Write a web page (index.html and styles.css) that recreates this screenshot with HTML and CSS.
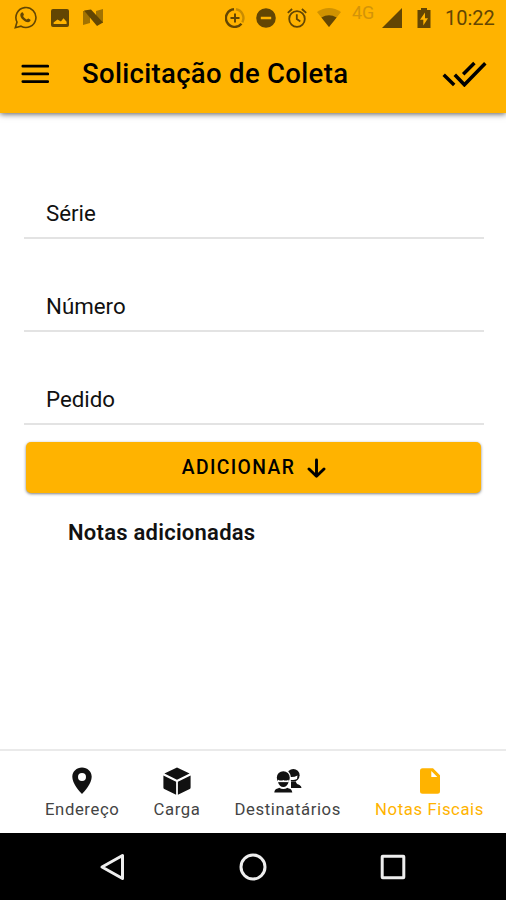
FILE: index.html
```html
<!doctype html>
<html lang="pt-BR">
	<head>
		<meta charset="UTF-8" />
		<meta name="viewport" content="width=device-width, initial-scale=1.0" />
		<title>Solicitação de Coleta</title>
		<link rel="stylesheet" href="styles.css">
	</head>
	<body>
		<header class="header">
			<div class="status-bar">
				<svg class="whatsapp" width="23" height="23" viewBox="0 0 23 23" fill="none" stroke="currentColor">
					<path d="M1.3 21.7 3 16A10 10 0 1 1 7 20.2Z" stroke-width="1.6" />
					<path d="M7.3 6.8c.7-.8 1.6-.7 1.9.1l.7 1.7c.2.6-.9 1.3-.7 1.7.8 1.5 1.8 2.4 3.4 3.1.6.2 1.1-1.1 1.7-.9l1.9.9c1 .6-.2 2.6-1.9 2.8-3.8.2-8.2-4.3-8-7.4 0-.8.4-1.5 1-2Z" fill="currentColor" stroke="none" />
				</svg>
				<svg class="image" width="18" height="18" viewBox="0 0 18 18">
					<path fill="currentColor" fill-rule="evenodd" d="M2 0h14a2 2 0 0 1 2 2v14a2 2 0 0 1-2 2H2a2 2 0 0 1-2-2V2a2 2 0 0 1 2-2Zm.6 15h13v-2.3l-3.1-3.5-2.6 3.2-3.4-1.8-3.9 2.8Z" />
				</svg>
				<svg class="nougat" width="21" height="17" viewBox="0 0 21 17" fill="currentColor">
					<path opacity=".6" d="M0 2h7v12l-7 2ZM13 2l7-2v14h-7Z" />
					<path d="M1 1.500 8 .5l12 13-6 3.500Z" />
				</svg>
				<svg class="data" width="20" height="20" viewBox="0 0 20 20" fill="none" stroke="currentColor" stroke-width="2.4">
					<path d="M9 1.3a8.8 8.8 0 1 0 7.5 14.4" />
					<path opacity=".35" d="M11 1.3a8.8 8.8 0 0 1 6.3 13" />
					<path stroke-width="2" d="M10 5.5v9M5.5 10h9" />
				</svg>
				<svg class="dnd" width="20" height="20" viewBox="0 0 20 20">
					<path fill="currentColor" fill-rule="evenodd" d="M10 .2a9.8 9.8 0 1 1 0 19.6A9.8 9.8 0 0 1 10 .2ZM4.8 8.8v2.4h10.4V8.8Z" />
				</svg>
				<svg class="alarm" width="20" height="20" viewBox="0 0 20 20" fill="none" stroke="currentColor" stroke-width="1.8">
					<circle cx="10" cy="11" r="7.8" />
					<path d="M.8 4.8 5.1 1M19.2 4.8 14.9 1M9.8 6.2V11l3.5 2.5" />
				</svg>
				<svg class="wifi" width="24" height="19" viewBox="0 0 24 19" fill="currentColor">
					<path opacity=".3" d="M0 4Q12-4 24 4L12 19Z" />
					<path d="M4.4 9.5Q12 5 19.6 9.5L12 19Z" />
				</svg>
				<span class="network">4G</span>
				<svg class="signal" width="20" height="20" viewBox="0 0 20 20">
					<path fill="currentColor" d="M20 0v20H0Z" />
				</svg>
				<svg class="battery" width="14" height="20" viewBox="0 0 14 20">
					<path fill="currentColor" fill-rule="evenodd" d="M4 2V0h6v2h3.5v18H.5V2ZM8 4.5 3 11.7h3.3v5.8l4.7-7.3H8Z" />
				</svg>
				<span class="clock">10:22</span>
			</div>
			<div class="toolbar">
				<svg width="28" height="20" viewBox="0 0 28 20" fill="none" stroke="currentColor" stroke-width="2.7" stroke-linecap="round">
					<path d="M1.8 2.2h25M1.8 9.9h25M1.8 17.6h25" />
				</svg>
				<h1>Solicitação de Coleta</h1>
				<svg class="done" width="45" height="26" viewBox="0 0 45 26" fill="none" stroke="currentColor" stroke-width="3.5">
					<path d="M1.7 13.7 12.2 23.9M12.8 13.7l9.6 10.1L43.3 2.3M21.2 13.2 32.4 2.1" />
				</svg>
			</div>
		</header>

		<main class="content">
			<div class="field">Série</div>
			<div class="field">Número</div>
			<div class="field">Pedido</div>
			<button type="button" class="add-button">
				Adicionar
				<svg width="19" height="20" viewBox="0 0 19 20" fill="none" stroke="currentColor" stroke-width="2.9" stroke-linecap="round" stroke-linejoin="round">
					<path d="M9.5 2v16M2 11l7.5 7.2L17 11" />
				</svg>
			</button>
			<h2>Notas adicionadas</h2>
		</main>

		<nav class="tabs">
			<div class="tab">
				<svg width="28" height="28" viewBox="0 0 28 28">
					<path fill="currentColor" fill-rule="evenodd" d="M14 .5c5.4 0 9.7 4 9.7 9.2 0 6.8-7.2 14.8-9.7 17.3-2.5-2.5-9.7-10.5-9.7-17.3C4.3 4.5 8.6.5 14 .5Zm0 5.5a4 4 0 1 0 0 8 4 4 0 0 0 0-8Z" />
				</svg>
				<span>Endereço</span>
			</div>
			<div class="tab">
				<svg width="28" height="28" viewBox="0 0 28 28" fill="currentColor">
					<path d="M14 .4 26.6 6.6 14 12.8 1.4 6.6ZM.4 8.5l12.7 6.2v13L1.3 22Q.4 21.5.4 20.5ZM27.6 8.5l-12.7 6.2v13L26.7 22Q27.6 21.5 27.6 20.5Z" />
				</svg>
				<span>Carga</span>
			</div>
			<div class="tab">
				<svg width="28" height="28" viewBox="0 0 28 28" fill="currentColor">
					<circle cx="19.3" cy="8.2" r="6.3" />
					<path d="M17 14.500h5c0 4 5 2 5.500 6.500H17Z" />
					<path d="M16 10q4 .5 7.500-1.500l-.5 3.500q-3.500 1.800-7 .5Z" fill="#fff" />
					<path d="M1.5 12C1.500 6 4.500 3 9.300 3s7.700 3 7.700 9c0 3-2 7-4 7.500 1 2.500 5.500 1.500 6 7H-.5c.5-5.500 5-4.500 6-7-2-.5-4-4.500-4-7.500Z" fill="#fff" />
					<circle cx="9.3" cy="10.700" r="6.500" />
					<path d="M4 12.700q3.500 1.600 5.300.2 1.800 1.400 5.300-.2v2.800H4Z" fill="#fff" />
					<path d="M4 15.300h10.600q-1.500 4.700-5.300 4.700T4 15.300Z" />
					<path d="M.3 25.600c.5-4 3-3.600 4.800-4.800q4.200 2.600 8.400 0c1.800 1.200 4.300.8 4.800 4.800Z" />
				</svg>
				<span>Destinatários</span>
			</div>
			<div class="tab active">
				<svg width="28" height="28" viewBox="0 0 28 28">
					<path fill="currentColor" fill-rule="evenodd" d="M6.5 1.3H17l7 7v15.9a2.5 2.5 0 0 1-2.5 2.500h-15A2.500 2.500 0 0 1 4 24.200V3.800a2.500 2.500 0 0 1 2.500-2.500ZM15.300 4v6h6Z" />
				</svg>
				<span>Notas Fiscais</span>
			</div>
		</nav>

		<div class="system-nav">
			<svg width="28" height="30" viewBox="0 0 28 30">
				<path d="M23.5 3.500v23L3 15Z" />
			</svg>
			<svg width="28" height="30" viewBox="0 0 28 30">
				<circle cx="14" cy="15" r="12" />
			</svg>
			<svg width="28" height="30" viewBox="0 0 28 30">
				<rect x="3.2" y="4.2" width="21.6" height="21.6" rx=".5" />
			</svg>
		</div>
	</body>
</html>
```

FILE: styles.css
```css
body {
	margin: 0;
	height: 900px;
	display: flex;
	flex-direction: column;
	font-family: Roboto, sans-serif;
	background-color: #fff;
	color: #111;
	overflow: hidden;
}
svg {
	display: block;
	flex: none;
}
.header {
	height: 113px;
	background-color: #ffb300;
	color: #000;
	box-shadow: 0 1px 6px rgba(0, 0, 0, 0.65);
}
.status-bar {
	display: flex;
	align-items: center;
	height: 35px;
	padding: 0 10px 0 14px;
	color: #634603;
}
.image {
	margin-left: 14px;
}
.nougat {
	margin-left: 14px;
}
.data {
	margin-left: auto;
}
.dnd, .alarm {
	margin-left: 11px;
}
.wifi {
	margin-left: 10px;
}
.network {
	margin: -10px 0 0 11px;
	width: 24px;
	font-size: 18px;
	line-height: 20px;
	color: #d39408;
}
.signal {
	margin: 1px 0 0 6px;
}
.battery {
	margin-left: 15px;
}
.clock {
	margin: 1px 0 0 14px;
	width: 51px;
	font-size: 20px;
	white-space: nowrap;
}
.toolbar {
	display: flex;
	align-items: center;
	height: 77px;
	padding: 0 19px 0 21px;
}
.toolbar h1 {
	margin: 0 0 0 33px;
	font-size: 27.5px;
	font-weight: 500;
	letter-spacing: 0.32px;
}
.done {
	margin-left: auto;
}
.content {
	flex: 1;
	padding: 33px 22px 0 24px;
}
.field {
	box-sizing: border-box;
	height: 93px;
	padding: 53px 22px 0;
	border-bottom: 2px solid #e3e3e3;
	font-size: 22.3px;
	line-height: 29px;
}
.add-button {
	display: flex;
	align-items: center;
	justify-content: center;
	gap: 12px;
	width: calc(100% - 5px);
	height: 51px;
	margin: 17px 3px 0 2px;
	padding: 0 0 0 1px;
	border: none;
	border-radius: 5px;
	background-color: #ffb300;
	box-shadow: 0 1px 3px rgba(0, 0, 0, 0.5);
	color: #000;
	font-family: inherit;
	font-size: 19.3px;
	font-weight: 500;
	letter-spacing: 1.4px;
	text-transform: uppercase;
}
.content h2 {
	margin: 26px 0 0 44px;
	font-size: 22px;
	line-height: 28px;
	font-weight: 600;
	letter-spacing: 0.25px;
}
.tabs {
	box-sizing: border-box;
	display: flex;
	justify-content: space-between;
	height: 84px;
	padding: 16px 22px 0 45px;
	border-top: 2px solid #eaeaea;
}
.tab {
	display: flex;
	flex-direction: column;
	align-items: center;
	font-size: 16.7px;
	line-height: 29px;
	letter-spacing: 0.6px;
	white-space: nowrap;
}
.tab span {
	color: #444;
}
.tab.active, .tab.active span {
	color: #ffb300;
}
.system-nav {
	display: flex;
	justify-content: center;
	gap: 112px;
	box-sizing: border-box;
	height: 67px;
	padding: 19px 0 0;
	background-color: #000;
}
.system-nav svg {
	fill: none;
	stroke: #eee;
	stroke-width: 3;
	stroke-linejoin: round;
}
```
